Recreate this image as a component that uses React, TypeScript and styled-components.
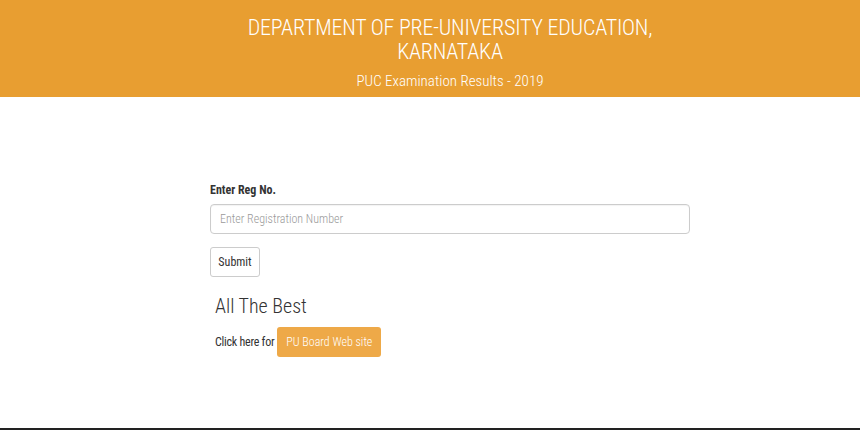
import styled, { createGlobalStyle } from "styled-components";

const GlobalStyle = createGlobalStyle`
    html, body {
        margin: 0;
        padding: 0;
        background: #ffffff;
    }
    body {
        font-family: "Liberation Sans Narrow", "Roboto Condensed", Roboto, "Liberation Sans", sans-serif;
        color: #333333;
    }
`;

const Page = styled.div`
    height: 430px;
    display: flex;
    flex-direction: column;
    border-bottom: 2px solid #222222;
    box-sizing: border-box;
`;

const Header = styled.header`
    background: #e89e31;
    color: #ffffff;
    text-align: center;
    height: 97px;
    box-sizing: border-box;
    padding: 16px 0 0 40px;
`;

const Title = styled.h1`
    margin: 0 auto;
    width: 440px;
    font-size: 22px;
    font-weight: 300;
    line-height: 24px;
    letter-spacing: -0.2px;
`;

const SubTitle = styled.p`
    margin: 8px 0 0;
    font-size: 15px;
    font-weight: 300;
    line-height: 18px;
`;

const Main = styled.main`
    padding: 85px 0 0 210px;
    width: 480px;
`;

const Label = styled.label`
    display: block;
    font-size: 12px;
    font-weight: bold;
    color: #333;
    line-height: 16px;
    margin-bottom: 6px;
`;

const Input = styled.input`
    display: block;
    width: 100%;
    height: 30px;
    box-sizing: border-box;
    border: 1px solid #cccccc;
    border-radius: 4px;
    padding: 0 9px;
    font-family: inherit;
    font-size: 12px;
    font-weight: 300;
    color: #555;
    box-shadow: inset 0 1px 1px rgba(0, 0, 0, 0.05);
    &::placeholder {
        color: #999;
    }
`;

const SubmitButton = styled.button`
    margin-top: 13px;
    width: 50px;
    height: 30px;
    background: #fff;
    border: 1px solid #cccccc;
    border-radius: 3px;
    font-family: inherit;
    font-size: 12px;
    color: #333;
    padding: 0;
`;

const Wishes = styled.div`
    padding-left: 5px;
    margin-top: 17px;
`;

const Best = styled.h3`
    margin: 0;
    font-size: 20px;
    font-weight: 300;
    line-height: 24px;
    color: #333;
`;

const LinkRow = styled.div`
    display: flex;
    align-items: center;
    gap: 3px;
    margin-top: 9px;
    font-size: 12px;
    letter-spacing: -0.25px;
`;

const SiteButton = styled.a`
    display: inline-flex;
    align-items: center;
    justify-content: center;
    width: 104px;
    height: 30px;
    background: #eea948;
    border-radius: 3px;
    color: #fff;
    text-decoration: none;
    font-size: 12px;
    font-weight: 300;
    letter-spacing: 0;
`;

const App = () => {
    return (
        <>
            <GlobalStyle />
            <Page>
                <Header>
                    <Title>DEPARTMENT OF PRE-UNIVERSITY EDUCATION, KARNATAKA</Title>
                    <SubTitle>PUC Examination Results - 2019</SubTitle>
                </Header>
                <Main>
                    <Label>Enter Reg No.</Label>
                    <Input placeholder="Enter Registration Number" />
                    <SubmitButton>Submit</SubmitButton>
                    <Wishes>
                        <Best>All The Best</Best>
                        <LinkRow>
                            Click here for
                            <SiteButton href="#">PU Board Web site</SiteButton>
                        </LinkRow>
                    </Wishes>
                </Main>
            </Page>
        </>
    );
}

export default App;
